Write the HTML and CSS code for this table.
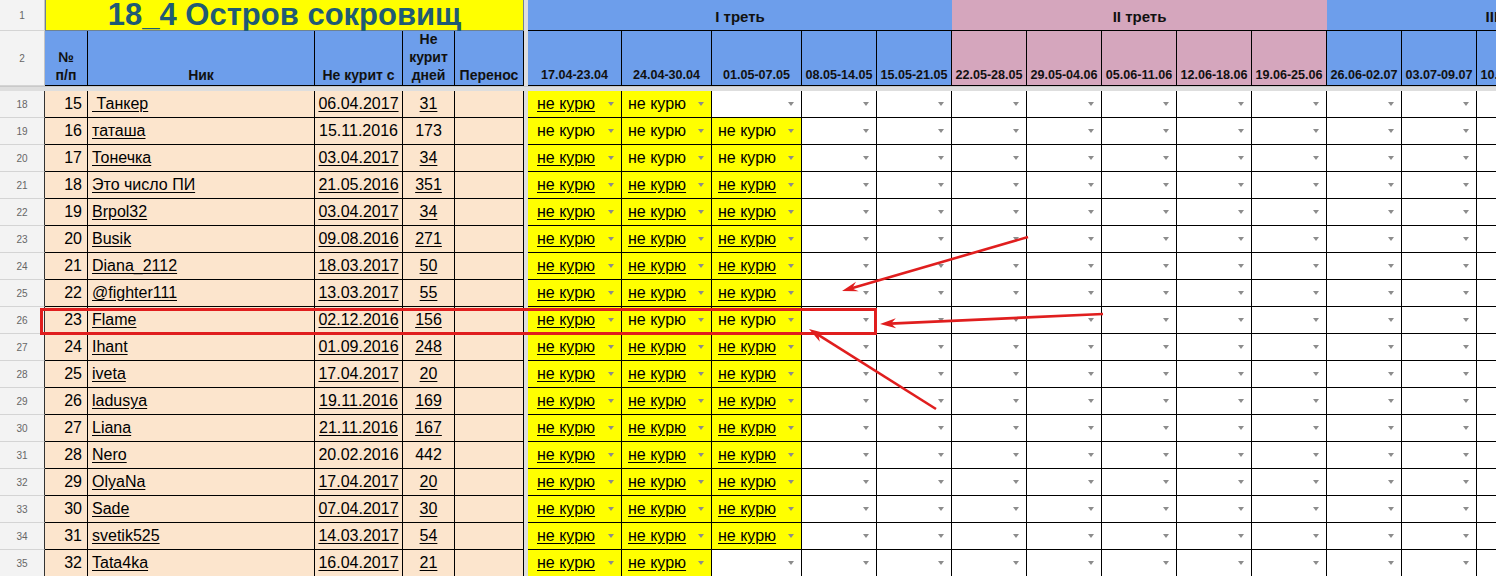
FILE: index.html
```html
<!DOCTYPE html>
<html lang="ru">
<head>
<meta charset="utf-8">
<title>18_4 Остров сокровищ</title>
<link rel="stylesheet" href="styles.css">
</head>
<body>
<div class="page">
<div class="sheet">
  <div class="row r1">
    <div class="rh">1</div>
    <div class="title">18_4 Остров сокровищ</div>
    <div class="fz"></div>
    <div class="grp blue">I треть</div>
    <div class="grp pink">II треть</div>
    <div class="grp blue">III треть</div>
  </div>
  <div class="row r2">
    <div class="rh">2</div>
    <div class="h">№<br>п/п</div>
    <div class="h">Ник</div>
    <div class="h">Не курит с</div>
    <div class="h">Не<br>курит<br>дней</div>
    <div class="h">Перенос</div>
    <div class="fz"></div>
    <div class="h d">17.04-23.04</div>
    <div class="h d">24.04-30.04</div>
    <div class="h d">01.05-07.05</div>
    <div class="h d">08.05-14.05</div>
    <div class="h d">15.05-21.05</div>
    <div class="h d p">22.05-28.05</div>
    <div class="h d p">29.05-04.06</div>
    <div class="h d p">05.06-11.06</div>
    <div class="h d p">12.06-18.06</div>
    <div class="h d p">19.06-25.06</div>
    <div class="h d">26.06-02.07</div>
    <div class="h d">03.07-09.07</div>
    <div class="h d">10.07-16.07</div>
    <div class="h d">17.07-23.07</div>
    <div class="h d">24.07-30.07</div>
  </div>
  <div class="band"></div>

  <div class="row dr">
    <div class="rh">18</div><div class="n">15</div><div class="nm"><u>&nbsp;Танкер</u></div><div class="dt"><u>06.04.2017</u></div><div class="dy"><u>31</u></div><div class="pr"></div><div class="fz"></div>
    <div class="dd y"><u>не курю</u></div><div class="dd y">не курю</div><div class="dd"></div><div class="dd"></div><div class="dd"></div><div class="dd"></div><div class="dd"></div><div class="dd"></div><div class="dd"></div><div class="dd"></div><div class="dd"></div><div class="dd"></div><div class="dd"></div><div class="dd"></div><div class="dd"></div>
  </div>
  <div class="row dr">
    <div class="rh">19</div><div class="n">16</div><div class="nm"><u>таташа</u></div><div class="dt">15.11.2016</div><div class="dy">173</div><div class="pr"></div><div class="fz"></div>
    <div class="dd y">не курю</div><div class="dd y">не курю</div><div class="dd y">не курю</div><div class="dd"></div><div class="dd"></div><div class="dd"></div><div class="dd"></div><div class="dd"></div><div class="dd"></div><div class="dd"></div><div class="dd"></div><div class="dd"></div><div class="dd"></div><div class="dd"></div><div class="dd"></div>
  </div>
  <div class="row dr">
    <div class="rh">20</div><div class="n">17</div><div class="nm"><u>Тонечка</u></div><div class="dt"><u>03.04.2017</u></div><div class="dy"><u>34</u></div><div class="pr"></div><div class="fz"></div>
    <div class="dd y"><u>не курю</u></div><div class="dd y">не курю</div><div class="dd y">не курю</div><div class="dd"></div><div class="dd"></div><div class="dd"></div><div class="dd"></div><div class="dd"></div><div class="dd"></div><div class="dd"></div><div class="dd"></div><div class="dd"></div><div class="dd"></div><div class="dd"></div><div class="dd"></div>
  </div>
  <div class="row dr">
    <div class="rh">21</div><div class="n">18</div><div class="nm"><u>Это число ПИ</u></div><div class="dt"><u>21.05.2016</u></div><div class="dy"><u>351</u></div><div class="pr"></div><div class="fz"></div>
    <div class="dd y"><u>не курю</u></div><div class="dd y"><u>не курю</u></div><div class="dd y"><u>не курю</u></div><div class="dd"></div><div class="dd"></div><div class="dd"></div><div class="dd"></div><div class="dd"></div><div class="dd"></div><div class="dd"></div><div class="dd"></div><div class="dd"></div><div class="dd"></div><div class="dd"></div><div class="dd"></div>
  </div>
  <div class="row dr">
    <div class="rh">22</div><div class="n">19</div><div class="nm"><u>Brpol32</u></div><div class="dt"><u>03.04.2017</u></div><div class="dy"><u>34</u></div><div class="pr"></div><div class="fz"></div>
    <div class="dd y"><u>не курю</u></div><div class="dd y"><u>не курю</u></div><div class="dd y"><u>не курю</u></div><div class="dd"></div><div class="dd"></div><div class="dd"></div><div class="dd"></div><div class="dd"></div><div class="dd"></div><div class="dd"></div><div class="dd"></div><div class="dd"></div><div class="dd"></div><div class="dd"></div><div class="dd"></div>
  </div>
  <div class="row dr">
    <div class="rh">23</div><div class="n">20</div><div class="nm"><u>Busik</u></div><div class="dt"><u>09.08.2016</u></div><div class="dy"><u>271</u></div><div class="pr"></div><div class="fz"></div>
    <div class="dd y"><u>не курю</u></div><div class="dd y"><u>не курю</u></div><div class="dd y"><u>не курю</u></div><div class="dd"></div><div class="dd"></div><div class="dd"></div><div class="dd"></div><div class="dd"></div><div class="dd"></div><div class="dd"></div><div class="dd"></div><div class="dd"></div><div class="dd"></div><div class="dd"></div><div class="dd"></div>
  </div>
  <div class="row dr">
    <div class="rh">24</div><div class="n">21</div><div class="nm"><u>Diana_2112</u></div><div class="dt"><u>18.03.2017</u></div><div class="dy"><u>50</u></div><div class="pr"></div><div class="fz"></div>
    <div class="dd y"><u>не курю</u></div><div class="dd y"><u>не курю</u></div><div class="dd y"><u>не курю</u></div><div class="dd"></div><div class="dd"></div><div class="dd"></div><div class="dd"></div><div class="dd"></div><div class="dd"></div><div class="dd"></div><div class="dd"></div><div class="dd"></div><div class="dd"></div><div class="dd"></div><div class="dd"></div>
  </div>
  <div class="row dr">
    <div class="rh">25</div><div class="n">22</div><div class="nm"><u>@fighter111</u></div><div class="dt"><u>13.03.2017</u></div><div class="dy"><u>55</u></div><div class="pr"></div><div class="fz"></div>
    <div class="dd y"><u>не курю</u></div><div class="dd y"><u>не курю</u></div><div class="dd y"><u>не курю</u></div><div class="dd"></div><div class="dd"></div><div class="dd"></div><div class="dd"></div><div class="dd"></div><div class="dd"></div><div class="dd"></div><div class="dd"></div><div class="dd"></div><div class="dd"></div><div class="dd"></div><div class="dd"></div>
  </div>
  <div class="row dr">
    <div class="rh">26</div><div class="n">23</div><div class="nm"><u>Flame</u></div><div class="dt"><u>02.12.2016</u></div><div class="dy"><u>156</u></div><div class="pr"></div><div class="fz"></div>
    <div class="dd y"><u>не курю</u></div><div class="dd y">не курю</div><div class="dd y">не курю</div><div class="dd"></div><div class="dd"></div><div class="dd"></div><div class="dd"></div><div class="dd"></div><div class="dd"></div><div class="dd"></div><div class="dd"></div><div class="dd"></div><div class="dd"></div><div class="dd"></div><div class="dd"></div>
  </div>
  <div class="row dr">
    <div class="rh">27</div><div class="n">24</div><div class="nm"><u>Ihant</u></div><div class="dt"><u>01.09.2016</u></div><div class="dy"><u>248</u></div><div class="pr"></div><div class="fz"></div>
    <div class="dd y"><u>не курю</u></div><div class="dd y"><u>не курю</u></div><div class="dd y"><u>не курю</u></div><div class="dd"></div><div class="dd"></div><div class="dd"></div><div class="dd"></div><div class="dd"></div><div class="dd"></div><div class="dd"></div><div class="dd"></div><div class="dd"></div><div class="dd"></div><div class="dd"></div><div class="dd"></div>
  </div>
  <div class="row dr">
    <div class="rh">28</div><div class="n">25</div><div class="nm"><u>iveta</u></div><div class="dt"><u>17.04.2017</u></div><div class="dy"><u>20</u></div><div class="pr"></div><div class="fz"></div>
    <div class="dd y"><u>не курю</u></div><div class="dd y"><u>не курю</u></div><div class="dd y"><u>не курю</u></div><div class="dd"></div><div class="dd"></div><div class="dd"></div><div class="dd"></div><div class="dd"></div><div class="dd"></div><div class="dd"></div><div class="dd"></div><div class="dd"></div><div class="dd"></div><div class="dd"></div><div class="dd"></div>
  </div>
  <div class="row dr">
    <div class="rh">29</div><div class="n">26</div><div class="nm"><u>ladusya</u></div><div class="dt"><u>19.11.2016</u></div><div class="dy"><u>169</u></div><div class="pr"></div><div class="fz"></div>
    <div class="dd y"><u>не курю</u></div><div class="dd y"><u>не курю</u></div><div class="dd y"><u>не курю</u></div><div class="dd"></div><div class="dd"></div><div class="dd"></div><div class="dd"></div><div class="dd"></div><div class="dd"></div><div class="dd"></div><div class="dd"></div><div class="dd"></div><div class="dd"></div><div class="dd"></div><div class="dd"></div>
  </div>
  <div class="row dr">
    <div class="rh">30</div><div class="n">27</div><div class="nm"><u>Liana</u></div><div class="dt"><u>21.11.2016</u></div><div class="dy"><u>167</u></div><div class="pr"></div><div class="fz"></div>
    <div class="dd y"><u>не курю</u></div><div class="dd y"><u>не курю</u></div><div class="dd y"><u>не курю</u></div><div class="dd"></div><div class="dd"></div><div class="dd"></div><div class="dd"></div><div class="dd"></div><div class="dd"></div><div class="dd"></div><div class="dd"></div><div class="dd"></div><div class="dd"></div><div class="dd"></div><div class="dd"></div>
  </div>
  <div class="row dr">
    <div class="rh">31</div><div class="n">28</div><div class="nm"><u>Nero</u></div><div class="dt">20.02.2016</div><div class="dy">442</div><div class="pr"></div><div class="fz"></div>
    <div class="dd y"><u>не курю</u></div><div class="dd y"><u>не курю</u></div><div class="dd y"><u>не курю</u></div><div class="dd"></div><div class="dd"></div><div class="dd"></div><div class="dd"></div><div class="dd"></div><div class="dd"></div><div class="dd"></div><div class="dd"></div><div class="dd"></div><div class="dd"></div><div class="dd"></div><div class="dd"></div>
  </div>
  <div class="row dr">
    <div class="rh">32</div><div class="n">29</div><div class="nm"><u>OlyaNa</u></div><div class="dt"><u>17.04.2017</u></div><div class="dy"><u>20</u></div><div class="pr"></div><div class="fz"></div>
    <div class="dd y"><u>не курю</u></div><div class="dd y"><u>не курю</u></div><div class="dd y"><u>не курю</u></div><div class="dd"></div><div class="dd"></div><div class="dd"></div><div class="dd"></div><div class="dd"></div><div class="dd"></div><div class="dd"></div><div class="dd"></div><div class="dd"></div><div class="dd"></div><div class="dd"></div><div class="dd"></div>
  </div>
  <div class="row dr">
    <div class="rh">33</div><div class="n">30</div><div class="nm"><u>Sade</u></div><div class="dt"><u>07.04.2017</u></div><div class="dy"><u>30</u></div><div class="pr"></div><div class="fz"></div>
    <div class="dd y"><u>не курю</u></div><div class="dd y"><u>не курю</u></div><div class="dd y"><u>не курю</u></div><div class="dd"></div><div class="dd"></div><div class="dd"></div><div class="dd"></div><div class="dd"></div><div class="dd"></div><div class="dd"></div><div class="dd"></div><div class="dd"></div><div class="dd"></div><div class="dd"></div><div class="dd"></div>
  </div>
  <div class="row dr">
    <div class="rh">34</div><div class="n">31</div><div class="nm"><u>svetik525</u></div><div class="dt"><u>14.03.2017</u></div><div class="dy"><u>54</u></div><div class="pr"></div><div class="fz"></div>
    <div class="dd y"><u>не курю</u></div><div class="dd y"><u>не курю</u></div><div class="dd y"><u>не курю</u></div><div class="dd"></div><div class="dd"></div><div class="dd"></div><div class="dd"></div><div class="dd"></div><div class="dd"></div><div class="dd"></div><div class="dd"></div><div class="dd"></div><div class="dd"></div><div class="dd"></div><div class="dd"></div>
  </div>
  <div class="row dr">
    <div class="rh">35</div><div class="n">32</div><div class="nm"><u>Tata4ka</u></div><div class="dt"><u>16.04.2017</u></div><div class="dy"><u>21</u></div><div class="pr"></div><div class="fz"></div>
    <div class="dd y"><u>не курю</u></div><div class="dd y"><u>не курю</u></div><div class="dd"></div><div class="dd"></div><div class="dd"></div><div class="dd"></div><div class="dd"></div><div class="dd"></div><div class="dd"></div><div class="dd"></div><div class="dd"></div><div class="dd"></div><div class="dd"></div><div class="dd"></div><div class="dd"></div>
  </div>
</div>

<svg class="marks" width="1496" height="576" viewBox="0 0 1496 576" aria-hidden="true">
  <rect x="41.5" y="309.5" width="834" height="24" fill="none" stroke="#e01e1e" stroke-width="3"/>
  <line x1="1028" y1="237" x2="851.6" y2="288.2" stroke="#e01e1e" stroke-width="2.6"/>
  <polygon points="842,291 856,281.7 852,288.5 858.8,291.3" fill="#e01e1e"/>
  <line x1="1103" y1="314" x2="890" y2="323.6" stroke="#e01e1e" stroke-width="2.6"/>
  <polygon points="880,324 895.8,318.3 891,323.6 896.2,328.3" fill="#e01e1e"/>
  <line x1="936" y1="409" x2="817.5" y2="334.3" stroke="#e01e1e" stroke-width="2.6"/>
  <polygon points="809,329 825.2,333.3 818.5,335 819.8,341.7" fill="#e01e1e"/>
</svg>
</div>
</body>
</html>
```

FILE: styles.css
```css
* { box-sizing: border-box; }

body {
  margin: 0;
  background: #fff;
  font-family: "Liberation Sans", Arial, sans-serif;
  color: #000;
}

.page {
  position: relative;
  width: 1496px;
  height: 576px;
  overflow: hidden;
}

.sheet {
  width: 1702px;
}

.row {
  display: grid;
  grid-template-columns: 45px 43px 227px 88px 52px 69px 4px 94px 90px 90px repeat(12, 75px);
}

.row > div {
  border-right: 1px solid #000;
  border-bottom: 1px solid #000;
  min-width: 0;
  overflow: hidden;
  white-space: nowrap;
}

/* row headers (grey gutter) */
.row > .rh {
  background: #f3f3f3;
  border-right: 1px solid #c4c4c4;
  border-bottom: 1px solid #d4d4d4;
  color: #666;
  font-size: 10px;
  display: flex;
  align-items: center;
  justify-content: center;
}

.dr > .rh {
  border-right-color: #333;
}

/* frozen column divider */
.row > .fz {
  background: #dedede;
  border: none;
}

.band {
  height: 5px;
  background: #dedede;
  border-top: 1px solid #c9c9c9;
}

/* row 1 */
.r1 { height: 31px; }

.row > .title {
  grid-column: 2 / span 5;
  background: #ffff00;
  border: 1px solid #6e8293;
  border-top: none;
  color: #1f5b74;
  font-weight: bold;
  font-size: 31px;
  line-height: 30px;
  text-align: center;
  overflow: visible;
}

.r1 > .grp {
  grid-column: span 5;
  border-right: none;
  font-weight: bold;
  font-size: 15px;
  display: flex;
  align-items: center;
  justify-content: center;
  padding-top: 3px;
  color: #111;
}

.blue { background: #6d9eeb; }
.pink { background: #d5a6bd; }

/* row 2 */
.r2 { height: 55px; }

.r2 > .h {
  background: #6d9eeb;
  font-weight: bold;
  font-size: 14px;
  line-height: 18px;
  color: #111;
  display: flex;
  align-items: flex-end;
  justify-content: center;
  text-align: center;
  padding-bottom: 1px;
}

.r2 > .h.d {
  font-size: 12.6px;
}

.r2 > .h.p {
  background: #d5a6bd;
}

/* data rows */
.dr { height: 27px; }

.dr > div {
  display: flex;
  align-items: center;
  font-size: 16px;
}

.dr > .n,
.dr > .nm,
.dr > .dt,
.dr > .dy,
.dr > .pr {
  background: #fce5cd;
}

.dr > .n { justify-content: flex-end; padding-right: 5px; }
.dr > .nm { padding-left: 4px; }
.dr > .dt { justify-content: center; }
.dr > .dy { justify-content: center; }

.dr > .dd {
  padding: 0 7px 0 6px;
}

.dr > .dd:nth-child(8) {
  padding-left: 9px;
}

.dr > .dd.y {
  background: #ffff00;
}

.dr > .dd::after {
  content: "";
  margin-left: auto;
  width: 0;
  height: 0;
  border-left: 3.5px solid transparent;
  border-right: 3.5px solid transparent;
  border-top: 4px solid #8c8c8c;
  flex: none;
}

u {
  text-underline-offset: 2px;
}

.marks {
  position: absolute;
  left: 0;
  top: 0;
  pointer-events: none;
}
```
